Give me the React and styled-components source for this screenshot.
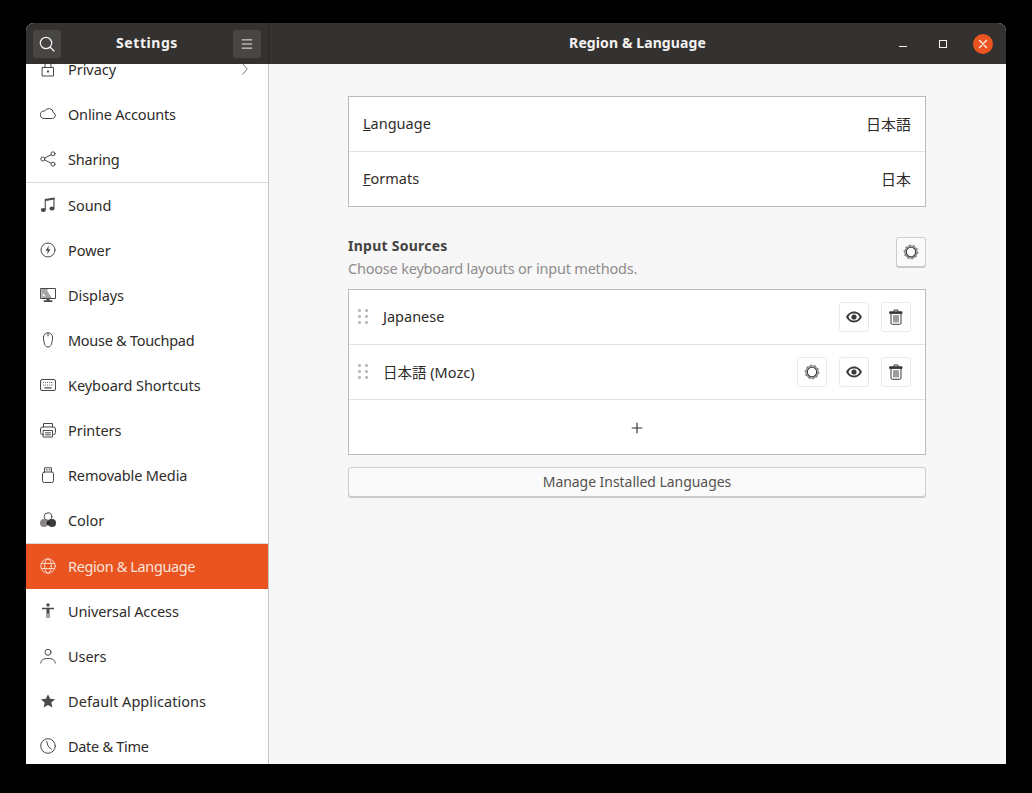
import React from "react";
import styled, { createGlobalStyle } from "styled-components";

const GlobalStyle = createGlobalStyle`
  html, body {
    margin: 0;
    padding: 0;
    height: 793px;
    background: #000;
    overflow: hidden;
  }
  body {
    font-family: "Noto Sans", "Noto Sans CJK JP", sans-serif;
    font-size: 14.5px;
    color: #2f2c2a;
  }
`;

const Svg = ({ size = 16, children, ...rest }) => (
  <svg
    width={size}
    height={size}
    viewBox="0 0 16 16"
    fill="none"
    stroke="currentColor"
    strokeWidth="1"
    strokeLinecap="round"
    strokeLinejoin="round"
    {...rest}
  >
    {children}
  </svg>
);

const icons = {
  privacy: (
    <>
      <rect x="2.5" y="6.5" width="11" height="8.5" />
      <path d="M5 6.500V4a3 3 0 0 1 6 0v2.500" />
      <rect x="7" y="9.500" width="2" height="2" fill="currentColor" stroke="none" />
    </>
  ),
  cloud: (
    <path d="M3.600 12.500h8.900a3 3 0 0 0 .9-5.800 4.600 4.600 0 0 0-8.700-1.600 3.700 3.700 0 0 0-1.100 7.400z" />
  ),
  sharing: (
    <>
      <circle cx="2.800" cy="8" r="2" />
      <circle cx="13" cy="2.800" r="2" />
      <circle cx="13" cy="13.200" r="2" />
      <path d="M4.600 7.100l6.600-3.400M4.600 8.900l6.600 3.400" />
    </>
  ),
  sound: (
    <g fill="currentColor" stroke="none">
      <path d="M4.700 2.100L14.500.6v2L5.800 3.900V13H4.700z" />
      <path d="M13.400 1h1.100v10.500h-1.100z" />
      <ellipse cx="3.300" cy="13" rx="2.500" ry="2.100" />
      <ellipse cx="12" cy="11.500" rx="2.500" ry="2.100" />
    </g>
  ),
  power: (
    <>
      <circle cx="8" cy="8" r="7" />
      <path d="M8.800 3.500L5.600 8.700h2.100L7.200 12.500l3.200-5.200H8.300z" fill="currentColor" stroke="none" />
    </>
  ),
  displays: (
    <>
      <path d="M.8 1.500h14.700v10H.8z" />
      <path d="M1.300 2h7L7 3.500l4.800 7.500H1.300z" fill="currentColor" stroke="none" opacity=".5" />
      <path d="M2.800 6l3 3.200h-3z" fill="#fff" stroke="none" />
      <path d="M6.500 11.500h3v2h-3zM3.800 13.300h8.500V15H3.800z" fill="currentColor" stroke="none" />
    </>
  ),
  mouse: (
    <>
      <path d="M3.500 5a4.500 4.200 0 0 1 9 0c0 3-.5 5.500-1.200 7.500-.6 1.600-1.700 2.500-3.300 2.500s-2.700-.9-3.300-2.500C4 10.500 3.500 8 3.500 5z" />
      <path d="M8 1v3" />
    </>
  ),
  keyboard: (
    <>
      <rect x="0.5" y="2.500" width="15" height="11" rx="1.500" />
      <path
        d="M3 5.500h.8M5 5.500h.8M7 5.500h.8M9 5.500h.8M11 5.500h.8M12.800 5.500h.4M3 8h.8M5 8h.8M7 8h.8M9 8h.8M11 8h.8M12.800 8h.4M4.500 10.800h7"
        strokeWidth="1.200"
        strokeLinecap="butt"
      />
    </>
  ),
  printer: (
    <>
      <path d="M3.500 5V1.500h9V5" />
      <path d="M3.500 12.500H2.500a2 2 0 0 1-2-2V7a2 2 0 0 1 2-2h11a2 2 0 0 1 2 2v3.500a2 2 0 0 1-2 2h-1" />
      <rect x="3.500" y="8.500" width="9" height="6.500" />
      <path d="M5.500 10.800h5M5.500 12.800h5" />
    </>
  ),
  media: (
    <>
      <rect x="2.500" y="5" width="11" height="10.500" rx="1.800" />
      <path d="M4.500 5V.8h7V5" />
      <path d="M6 2.800h1.500M8.700 2.800h1.500" strokeWidth="1.200" strokeLinecap="butt" />
    </>
  ),
  color: (
    <>
      <circle cx="8" cy="4.600" r="3.800" fill="#fff" />
      <circle cx="4" cy="11" r="4" fill="#8a8786" stroke="none" />
      <circle cx="12" cy="11" r="4" fill="#3d3b39" stroke="none" />
      <path d="M8 8.200a4 4 0 0 1 0 5.600 4 4 0 0 1 0-5.600z" fill="#1f1e1d" stroke="none" />
    </>
  ),
  globe: (
    <>
      <circle cx="8" cy="8" r="7.200" />
      <ellipse cx="8" cy="8" rx="3.300" ry="7.200" />
      <path d="M1.400 5.500h13.200M1.400 10.500h13.200" />
    </>
  ),
  access: (
    <g fill="currentColor" stroke="none">
      <circle cx="8" cy="2" r="1.700" />
      <path d="M2 4.800h12v1.500H9.500V15H8.500v-4.500h-1V15h-1V6.300H2z" />
    </g>
  ),
  user: (
    <>
      <circle cx="8" cy="4.300" r="3" />
      <path d="M.8 15c0-3 2.800-4.600 7.200-4.600s7.200 1.600 7.200 4.600" />
    </>
  ),
  star: (
    <path
      d="M8 1.200l2.100 4.600 5 .5-3.800 3.300 1.100 4.900L8 12.100l-4.400 2.500 1.100-4.900L.9 6.300l5-.5z"
      fill="currentColor"
      stroke="none"
    />
  ),
  clock: (
    <>
      <circle cx="8" cy="8" r="7.300" />
      <path d="M6.800 3.600L8 8l3.400 3.200" />
    </>
  ),
};

const Gear = () => (
  <Svg size={16}>
    <circle cx="8" cy="8" r="6.100" stroke="#8f8d8b" strokeWidth="1.300" />
    <circle cx="8" cy="8" r="4.700" strokeWidth="1.100" />
    <circle
      cx="8"
      cy="8"
      r="6.900"
      strokeWidth="0.800"
      strokeDasharray="1.600 2.735"
      strokeLinecap="butt"
    />
  </Svg>
);

const Eye = () => (
  <Svg size={16}>
    <path
      fillRule="evenodd"
      fill="currentColor"
      stroke="none"
      d="M8 2.600c3.700 0 6.600 2.500 7.900 5.400-1.300 2.900-4.200 5.400-7.900 5.400S1.400 10.900.1 8C1.400 5.100 4.300 2.600 8 2.600zm0 2A5.300 5.300 0 0 0 2.500 8 5.300 5.300 0 0 0 8 11.400 5.300 5.300 0 0 0 13.500 8 5.300 5.300 0 0 0 8 4.600z"
    />
    <circle cx="8" cy="8" r="2.600" fill="currentColor" stroke="none" />
  </Svg>
);

const Trash = () => (
  <Svg size={16}>
    <path d="M6 2.200V1h4v1.200" />
    <path d="M2 2.800h12v1.600H2z" fill="currentColor" />
    <path d="M3 4.500V14a1.300 1.300 0 0 0 1.300 1.300h7.400A1.300 1.300 0 0 0 13 14V4.500" />
    <path d="M6 6.500v6.500M8 6.500v6.500M10 6.500v6.500" />
  </Svg>
);

const Plus = () => (
  <Svg size={12}>
    <path d="M8 1v14M1 8h14" strokeWidth="1.500" strokeLinecap="butt" />
  </Svg>
);

const Stage = styled.div`
  padding: 23px 26px 29px;
  height: 741px;
`;

const Window = styled.div`
  display: flex;
  flex-direction: column;
  height: 741px;
  border-radius: 8px 8px 0 0;
  overflow: hidden;
  background: #f7f7f7;
`;

const HeaderBar = styled.header`
  display: flex;
  flex: 0 0 41px;
  background: #343231;
  color: #f4f3f2;
`;

const HeaderLeft = styled.div`
  display: flex;
  align-items: center;
  justify-content: space-between;
  box-sizing: border-box;
  width: 243px;
  padding: 0 7px;
  border-right: 1px solid #292725;
`;

const HeaderRight = styled.div`
  display: flex;
  flex: 1;
  align-items: center;
  justify-content: center;
  position: relative;
`;

const HeaderButton = styled.div`
  display: flex;
  align-items: center;
  justify-content: center;
  width: 28px;
  height: 28px;
  border-radius: 3px;
  background: #484644;
`;

const Title = styled.div`
  padding-bottom: 2px;
  font-weight: 700;
  font-size: 14px;
  letter-spacing: ${(p) => (p.$wide ? "0.55px" : "0.1px")};
`;

const WindowControls = styled.div`
  position: absolute;
  top: 0;
  right: 0;
  bottom: 0;
  display: flex;
  align-items: center;
  gap: 20px;
  padding-right: 13px;
`;

const ControlSlot = styled.div`
  display: flex;
  align-items: center;
  justify-content: center;
  width: 20px;
  height: 20px;
`;

const MinimizeMark = styled.div`
  width: 8px;
  height: 1px;
  margin-top: 5px;
  background: #f4f3f2;
`;

const MaximizeMark = styled.div`
  box-sizing: border-box;
  width: 8px;
  height: 8px;
  border: 1px solid #f4f3f2;
`;

const CloseButton = styled.div`
  display: flex;
  align-items: center;
  justify-content: center;
  width: 20px;
  height: 20px;
  border-radius: 50%;
  background: #e95420;
  color: #fbeee9;
`;

const Body = styled.div`
  display: flex;
  flex: 1;
  min-height: 0;
`;

const Sidebar = styled.nav`
  flex: 0 0 242px;
  overflow: hidden;
  background: #fff;
  border-right: 1px solid #c8c6c4;
`;

const SidebarList = styled.div`
  margin-top: -17px;
`;

const SidebarRow = styled.div`
  display: flex;
  align-items: center;
  height: ${(p) => (p.$divider ? "46px" : "45px")};
  padding: 0 17px 0 14px;
  gap: 12px;
  box-sizing: border-box;
  background: ${(p) => (p.$active ? "#e95420" : "transparent")};
  color: ${(p) => (p.$active ? "#fbe3da" : "#2f2c2a")};
  border-bottom: ${(p) => (p.$divider ? "1px solid #dcdad8" : "0")};
`;

const SidebarIcon = styled.span`
  display: flex;
  padding-bottom: 1px;
  color: ${(p) => (p.$active ? "#fbd5c6" : "#4b4947")};
`;

const SidebarLabel = styled.span`
  flex: 1;
  padding-bottom: 2px;
  letter-spacing: ${(p) => p.$tracking || "-0.05px"};
`;

const Content = styled.main`
  flex: 1;
  display: flex;
  flex-direction: column;
  padding: 32px 80px 0 79px;
`;

const Panel = styled.div`
  background: #fff;
  border: 1px solid #bdbbb9;
`;

const Row = styled.div`
  display: flex;
  align-items: center;
  height: 54px;
  padding: 0 14px;
  border-top: ${(p) => (p.$first ? "0" : "1px solid #e4e3e1")};
`;

const RowLabel = styled.span`
  flex: 1;
  padding-bottom: 2px;
`;

const RowValue = styled.span`
  padding-bottom: 2px;
  font-size: 15px;
  font-family: "Noto Sans CJK JP", "Noto Sans", sans-serif;
`;

const SectionHead = styled.div`
  display: flex;
  justify-content: space-between;
  align-items: flex-start;
  margin: 30px 0 7px;
  height: 45px;
`;

const SectionTitle = styled.div`
  font-weight: 700;
  font-size: 14px;
  line-height: 18px;
  letter-spacing: 0.25px;
  color: #454240;
`;

const SectionHint = styled.div`
  margin-top: 4px;
  line-height: 18px;
  color: #8f8d8b;
  letter-spacing: -0.2px;
`;

const IconButton = styled.div`
  display: flex;
  align-items: center;
  justify-content: center;
  box-sizing: border-box;
  width: 30px;
  height: 30px;
  border-radius: 3px;
  color: #3d3b39;
  background: ${(p) => (p.$raised ? "#fafafa" : "#fff")};
  border: 1px solid ${(p) => (p.$raised ? "#cfcdcb" : "#ebeae9")};
  box-shadow: ${(p) => (p.$raised ? "0 1px 0 #c9c7c5" : "none")};
`;

const SourceRow = styled(Row)`
  padding: 0 14px 0 9px;
  gap: 12px;
`;

const Grip = styled.div`
  display: grid;
  grid-template-columns: 3px 3px;
  grid-auto-rows: 3px;
  gap: 3px 4px;
  margin-bottom: 2px;

  span {
    background: #bdbbb9;
    border-radius: 1px;
  }
`;

const SourceName = styled.span`
  flex: 1;
  margin-left: 3px;
  padding-bottom: 2px;
`;

const SourceActions = styled.div`
  display: flex;
  gap: 12px;
`;

const AddRow = styled(Row)`
  justify-content: center;
  padding-top: 2px;
  box-sizing: border-box;
  height: 55px;
  color: #2f2c2a;
`;

const ManageButton = styled.div`
  display: flex;
  align-items: center;
  justify-content: center;
  box-sizing: border-box;
  height: 30px;
  margin-top: 12px;
  padding-bottom: 2px;
  font-size: 14px;
  letter-spacing: -0.05px;
  color: #55524f;
  background: #fafafa;
  border: 1px solid #cfcdcb;
  border-radius: 3px;
  box-shadow: 0 1px 0 #c9c7c5;
`;

const sidebarItems = [
  { icon: "privacy", label: "Privacy", chevron: true },
  { icon: "cloud", label: "Online Accounts", tracking: "-0.2px" },
  { icon: "sharing", label: "Sharing", divider: true, tracking: "-0.15px" },
  { icon: "sound", label: "Sound" },
  { icon: "power", label: "Power" },
  { icon: "displays", label: "Displays" },
  { icon: "mouse", label: "Mouse & Touchpad", tracking: "-0.28px" },
  { icon: "keyboard", label: "Keyboard Shortcuts" },
  { icon: "printer", label: "Printers" },
  { icon: "media", label: "Removable Media", tracking: "-0.15px" },
  { icon: "color", label: "Color", divider: true },
  { icon: "globe", label: "Region & Language", active: true, tracking: "-0.38px" },
  { icon: "access", label: "Universal Access", tracking: "-0.12px" },
  { icon: "user", label: "Users" },
  { icon: "star", label: "Default Applications", tracking: "0.06px" },
  { icon: "clock", label: "Date & Time", tracking: "-0.3px" },
];

const Source = ({ name, gear, first }) => (
  <SourceRow $first={first}>
    <Grip>
      {[0, 1, 2, 3, 4, 5].map((i) => (
        <span key={i} />
      ))}
    </Grip>
    <SourceName>{name}</SourceName>
    <SourceActions>
      {gear && (
        <IconButton>
          <Gear />
        </IconButton>
      )}
      <IconButton>
        <Eye />
      </IconButton>
      <IconButton>
        <Trash />
      </IconButton>
    </SourceActions>
  </SourceRow>
);

export default function App() {
  return (
    <Stage>
      <GlobalStyle />
      <Window>
        <HeaderBar>
          <HeaderLeft>
            <HeaderButton>
              <Svg size={16}>
                <circle cx="7" cy="7" r="5.700" strokeWidth="1.200" />
                <path d="M11.200 11.200L15 15" strokeWidth="1.300" />
              </Svg>
            </HeaderButton>
            <Title $wide>Settings</Title>
            <HeaderButton>
              <Svg size={12}>
                <path d="M1 2.500h14M1 8h14M1 13.500h14" strokeWidth="1.300" strokeLinecap="butt" />
              </Svg>
            </HeaderButton>
          </HeaderLeft>
          <HeaderRight>
            <Title>Region &amp; Language</Title>
            <WindowControls>
              <ControlSlot>
                <MinimizeMark />
              </ControlSlot>
              <ControlSlot>
                <MaximizeMark />
              </ControlSlot>
              <CloseButton>
                <Svg size={10}>
                  <path d="M2.500 2.500l11 11M13.500 2.500l-11 11" strokeWidth="2.200" />
                </Svg>
              </CloseButton>
            </WindowControls>
          </HeaderRight>
        </HeaderBar>
        <Body>
          <Sidebar>
            <SidebarList>
              {sidebarItems.map((item) => (
                <SidebarRow key={item.label} $active={item.active} $divider={item.divider}>
                  <SidebarIcon $active={item.active}>
                    <Svg>{icons[item.icon]}</Svg>
                  </SidebarIcon>
                  <SidebarLabel $tracking={item.tracking}>{item.label}</SidebarLabel>
                  {item.chevron && (
                    <SidebarIcon>
                      <Svg size={12}>
                        <path d="M5 1l6 7-6 7" />
                      </Svg>
                    </SidebarIcon>
                  )}
                </SidebarRow>
              ))}
            </SidebarList>
          </Sidebar>
          <Content>
            <Panel>
              <Row $first>
                <RowLabel>
                  <u>L</u>anguage
                </RowLabel>
                <RowValue>日本語</RowValue>
              </Row>
              <Row>
                <RowLabel>
                  <u>F</u>ormats
                </RowLabel>
                <RowValue>日本</RowValue>
              </Row>
            </Panel>
            <SectionHead>
              <div>
                <SectionTitle>Input Sources</SectionTitle>
                <SectionHint>Choose keyboard layouts or input methods.</SectionHint>
              </div>
              <IconButton $raised>
                <Gear />
              </IconButton>
            </SectionHead>
            <Panel>
              <Source name="Japanese" first />
              <Source name="日本語 (Mozc)" gear />
              <AddRow>
                <Plus />
              </AddRow>
            </Panel>
            <ManageButton>Manage Installed Languages</ManageButton>
          </Content>
        </Body>
      </Window>
    </Stage>
  );
}
